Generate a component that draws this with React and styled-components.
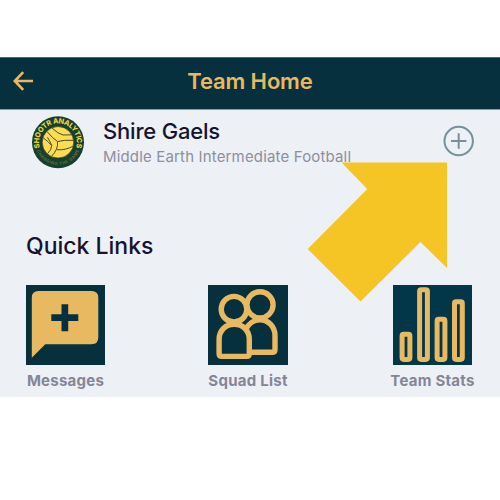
import React from "react";
import styled, { createGlobalStyle } from "styled-components";

const GlobalStyle = createGlobalStyle`
  * { box-sizing: border-box; }
  body { margin: 0; background: #fff; font-family: Inter, sans-serif; }
  svg { display: block; flex: none; }
`;

const Page = styled.div`
  width: 500px;
  height: 500px;
  padding-top: 57px;
  background: #fff;
  overflow: hidden;
`;

const Screen = styled.main`
  position: relative;
  height: 340px;
  background: #edf1f6;
`;

const Header = styled.header`
  display: grid;
  grid-template-columns: 48px 1fr 48px;
  align-items: center;
  height: 53px;
  padding-bottom: 5px;
  background: #07303f;
  border-top: 1px solid #4b6874;
  border-bottom: 1px solid #8b9ba5;
`;

const BackButton = styled.button`
  width: 48px;
  padding: 0 0 0 12px;
  border: 0;
  background: none;
`;

const Title = styled.h1`
  margin: 0;
  color: #e8b960;
  font-size: 22px;
  line-height: 28px;
  font-weight: 600;
  letter-spacing: -0.15px;
  text-align: center;
`;

const TeamRow = styled.section`
  display: flex;
  align-items: flex-start;
  height: 64px;
  padding: 5px 25px 0 31px;
`;

const TeamText = styled.div`
  flex: 1;
  padding: 2px 0 0 18px;
`;

const TeamName = styled.h2`
  margin: 0;
  color: #151430;
  font-size: 22px;
  line-height: 28px;
  font-weight: 500;
  letter-spacing: -0.2px;
  white-space: nowrap;
`;

const League = styled.p`
  margin: 1px 0 0;
  color: #8d8e9f;
  font-size: 15px;
  line-height: 21px;
  letter-spacing: 0.16px;
  white-space: nowrap;
`;

const AddButton = styled.button`
  margin-top: 10px;
  padding: 0;
  border: 0;
  background: none;
`;

const SectionTitle = styled.h2`
  margin: 57px 0 0 26px;
  color: #151430;
  font-size: 23px;
  line-height: 30px;
  font-weight: 500;
`;

const Links = styled.nav`
  display: flex;
  justify-content: space-between;
  padding: 24px 25px 0 25px;
`;

const LinkItem = styled.div`
  display: flex;
  flex-direction: column;
  align-items: center;
  width: ${(p) => p.$width || 79}px;
`;

const Tile = styled.svg`
  width: 79.5px;
  height: 79.5px;
  background: ${(p) => p.$bg || "#07303f"};
`;

const Label = styled.span`
  margin-top: 6px;
  color: #858597;
  font-size: 15px;
  line-height: 20px;
  font-weight: 700;
  letter-spacing: 0.25px;
  white-space: nowrap;
`;

const Pointer = styled.svg`
  position: absolute;
  left: 307px;
  top: 105px;
`;

const GOLD = "#e8b960";

function Crest() {
  return (
    <svg width="54" height="54" viewBox="-27 -27.3 54 54">
      <defs>
        <path id="crest-top" d="M-18 5.8A18.9 18.9 0 1 1 18 5.8" />
        <path id="crest-bottom" d="M-21.5 7A22.6 22.6 0 0 0 21.5 7" />
      </defs>
      <circle r="26" fill="#173f30" />
      <text fill="#e8d33c" fontSize="7.2" fontWeight="800" fontFamily="Inter, sans-serif">
        <textPath href="#crest-top" startOffset="50%" textAnchor="middle" textLength="70" lengthAdjust="spacing">SHOOTR ANALYTICS</textPath>
      </text>
      <text fill="#78823a" fontSize="4" fontWeight="500" fontFamily="Inter, sans-serif">
        <textPath href="#crest-bottom" startOffset="50%" textAnchor="middle" textLength="54">CHANGING THE GAME</textPath>
      </text>
      <circle r="15.8" fill="#fbdc52" stroke="#283a26" strokeWidth="0.7" />
      <g fill="none" stroke="#4b4b25" strokeWidth="1">
        <path d="M-11-10.8Q-5-3.5-0.5-0.8Q6-2.5 15.3-2" />
        <path d="M-0.5-0.8Q0.5 7-6.5 14" />
        <path d="M-6-14.3Q0-8.5 5-7.3Q9-7.5 13.6-7.4" />
        <path d="M-14.8-4.5Q-10-1-6.3 3.2Q-8-1-10.5-5" />
        <path d="M-6.3 3.2Q-6.5 7.5-10.5 11.4" />
        <path d="M14.8 4Q8 8-1 7.4" />
      </g>
    </svg>
  );
}

function MessageTile() {
  return (
    <Tile viewBox="0 0 79.5 79.5">
      <path fill={GOLD} d="M12.5 6H65.5Q72.3 6 72.3 12.7V52.6Q72.3 59.3 65.5 59.3H19.3L5.8 72.7V12.7Q5.8 6 12.5 6Z" />
      <path fill="#07303f" d="M35.5 19.3H42.2V29.2H52.3V36H42.2V46.3H35.5V36H25.3V29.2H35.5Z" />
    </Tile>
  );
}

function SquadTile() {
  return (
    <Tile viewBox="0 0 79.5 79.5">
      <g fill="none" stroke={GOLD} strokeWidth="5.4" strokeLinejoin="round">
        <circle cx="26" cy="24.2" r="12.8" />
        <circle cx="52" cy="19.8" r="13.1" />
        <path d="M37.8 44.5C40.5 38.5 46 34.8 52 34.8C60.5 34.8 67 42 67 50.5V64.5Q67 67.3 64.2 67.3H42" />
        <path d="M11.1 54.5C11.1 45.5 17.5 39.2 26.2 39.2C35 39.2 41.3 45.5 41.3 54.5V68.8Q41.3 71.4 38.7 71.4H13.8Q11.1 71.4 11.1 68.8Z" />
      </g>
    </Tile>
  );
}

const BARS = [
  { x: 9.1, y: 49.3 },
  { x: 26.6, y: 4.7 },
  { x: 44.1, y: 34.3 },
  { x: 61.5, y: 16.7 },
];

function StatsTile() {
  return (
    <Tile viewBox="0 0 79.5 79.5" $bg="#023649">
      {BARS.map((b) => (
        <rect key={b.x} x={b.x} y={b.y} width="7.8" height={74.4 - b.y} rx="1.6" fill="none" stroke={GOLD} strokeWidth="5" />
      ))}
    </Tile>
  );
}

export default function App() {
  return (
    <>
      <GlobalStyle />
      <Page>
        <Screen>
          <Header>
            <BackButton aria-label="Back">
              <svg width="22" height="22" viewBox="0 0 22 22" fill="none" stroke={GOLD} strokeWidth="2.6">
                <path d="M21 11H3M11.2 2.2L2.8 11L11.2 19.8" />
              </svg>
            </BackButton>
            <Title>Team Home</Title>
          </Header>
          <TeamRow>
            <Crest />
            <TeamText>
              <TeamName>Shire Gaels</TeamName>
              <League>Middle Earth Intermediate Football</League>
            </TeamText>
            <AddButton aria-label="Add">
              <svg width="32" height="32" viewBox="0 0 32 32" fill="none" stroke="#77909b" strokeWidth="2">
                <circle cx="15.7" cy="16" r="14.2" />
                <path d="M15.7 8.3V23.7M8 16H23.4" />
              </svg>
            </AddButton>
          </TeamRow>
          <SectionTitle>Quick Links</SectionTitle>
          <Links>
            <LinkItem $width={81}>
              <MessageTile />
              <Label>Messages</Label>
            </LinkItem>
            <LinkItem>
              <SquadTile />
              <Label>Squad List</Label>
            </LinkItem>
            <LinkItem $width={85}>
              <StatsTile />
              <Label>Team Stats</Label>
            </LinkItem>
          </Links>
          <Pointer width="141" height="141" viewBox="307 162 141 141">
            <path fill="#f5c526" d="M341.5 162.4H447V268L420.5 242L360.5 301.5L307.7 249L367.3 189Z" />
          </Pointer>
        </Screen>
      </Page>
    </>
  );
}
